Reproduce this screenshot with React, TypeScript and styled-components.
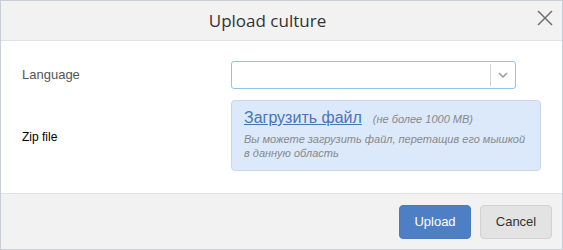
import styled, { createGlobalStyle } from "styled-components";

const GlobalStyle = createGlobalStyle`
	html, body {
		margin: 0;
		padding: 0;
		background: #fff;
	}
`;

const Dialog = styled.div`
	width: 563px;
	height: 250px;
	box-sizing: border-box;
	border: 1px solid #c9cdd5;
	display: flex;
	flex-direction: column;
	font-family: "Liberation Sans", Arial, sans-serif;
	background: #fff;
`;

const Header = styled.div`
	position: relative;
	height: 39px;
	flex-shrink: 0;
	background: #f2f2f2;
	border-bottom: 1px solid #e1e1e1;
	display: flex;
	align-items: center;
	justify-content: center;
	padding-right: 28px;
	font-family: "Open Sans", sans-serif;
	font-size: 17px;
	color: #333;
`;

const CloseButton = styled.button`
	position: absolute;
	right: 8px;
	top: 8px;
	width: 18px;
	height: 18px;
	padding: 0;
	border: none;
	background: none;
	cursor: pointer;
	display: flex;
`;

const Body = styled.div`
	flex: 1;
	display: grid;
	grid-template-columns: 209px 1fr;
	grid-template-rows: 28px 71px;
	row-gap: 11px;
	padding: 20px 20px 0 21px;
	align-items: center;
`;

const Label = styled.div<{ strong?: boolean }>`
	font-size: ${props => props.strong ? "12px" : "13px"};
	color: ${props => props.strong ? "#000" : "#555"};
	margin-top: ${props => props.strong ? "2px" : "-1px"};
`;

const SelectBox = styled.div`
	width: 285px;
	height: 28px;
	box-sizing: border-box;
	border: 1px solid #8fc3f2;
	border-radius: 3px;
	display: flex;
	justify-content: flex-end;
	background: #fff;
`;

const SelectArrow = styled.div`
	width: 24px;
	border-left: 1px solid #d4d4d4;
	margin: 2px 0;
	display: flex;
	align-items: center;
	justify-content: center;
`;

const DropZone = styled.div`
	width: 310px;
	height: 71px;
	box-sizing: border-box;
	background: #dce9fb;
	border: 1px solid #cbd7e6;
	border-radius: 4px;
	padding: 8px 12px 0 12px;
`;

const UploadLink = styled.a`
	font-size: 16px;
	color: #4a73b6;
	text-decoration: underline;
	cursor: pointer;
`;

const Hint = styled.span`
	font-size: 11px;
	font-style: italic;
	color: #888;
	margin-left: 11px;
`;

const DropText = styled.div`
	font-size: 11px;
	font-style: italic;
	color: #888;
	line-height: 13.5px;
	margin-top: 6px;
`;

const Footer = styled.div`
	height: 55px;
	flex-shrink: 0;
	background: #f2f2f2;
	border-top: 1px solid #e1e1e1;
	display: flex;
	justify-content: flex-end;
	align-items: center;
	gap: 9px;
	padding-right: 10px;
`;

const Button = styled.button<{ primary?: boolean }>`
	width: 72px;
	height: 34px;
	border-radius: 4px;
	font-family: "Liberation Sans", Arial, sans-serif;
	font-size: 13px;
	cursor: pointer;
	border: 1px solid ${props => props.primary ? "#4b7cc2" : "#d2d2d2"};
	background: ${props => props.primary ? "#4e7fc4" : "#e3e3e3"};
	color: ${props => props.primary ? "#fff" : "#333"};
`;

const App = () => {
	return (
		<>
			<GlobalStyle />
			<Dialog>
				<Header>
					Upload culture
					<CloseButton aria-label="close">
						<svg width="18" height="18" viewBox="0 0 18 18">
							<path d="M2 2L16 16M16 2L2 16" stroke="#707070" strokeWidth="1.5" fill="none" />
						</svg>
					</CloseButton>
				</Header>
				<Body>
					<Label>Language</Label>
					<SelectBox>
						<SelectArrow>
							<svg width="10" height="6" viewBox="0 0 10 6">
								<path d="M1 1L5 5L9 1" stroke="#999" strokeWidth="1.5" fill="none" />
							</svg>
						</SelectArrow>
					</SelectBox>
					<Label strong>Zip file</Label>
					<DropZone>
						<div>
							<UploadLink>Загрузить файл</UploadLink>
							<Hint>(не более 1000 MB)</Hint>
						</div>
						<DropText>
							Вы можете загрузить файл, перетащив его мышкой
							<br />
							в данную область
						</DropText>
					</DropZone>
				</Body>
				<Footer>
					<Button primary>Upload</Button>
					<Button>Cancel</Button>
				</Footer>
			</Dialog>
		</>
	);
};

export default App;
